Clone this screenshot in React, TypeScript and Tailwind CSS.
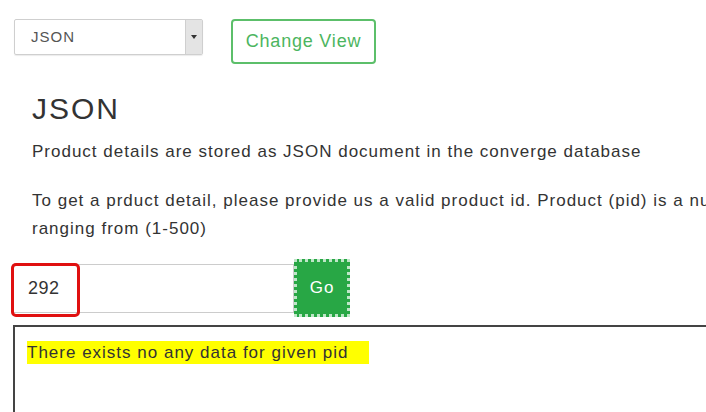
import React from "react";

export default function App() {
  return (
    <div className="w-[706px] h-[412px] overflow-hidden bg-white relative" style={{ fontFamily: '"Liberation Sans", Arial, sans-serif' }}>
      <div className="w-[820px]">
        <div className="flex items-start pt-[19px] pl-[14px] gap-[28px]">
          <div className="w-[189px] h-[36px] border border-[#cfcfcf] rounded-[2px] flex items-stretch shadow-[0_1px_1px_rgba(0,0,0,0.08)]">
            <div className="flex-1 flex items-center pl-[16px] text-[15px] tracking-[1px] text-[#555]">JSON</div>
            <div className="w-[17px] bg-[#e4e4e4] border-l border-[#cfcfcf] flex items-center justify-center">
              <div className="w-0 h-0 border-l-[3px] border-r-[3px] border-t-[4px] border-l-transparent border-r-transparent border-t-[#333]" />
            </div>
          </div>
          <button className="w-[145px] h-[45px] border-2 border-[#5cbf6a] rounded-[4px] text-[18px] tracking-[0.8px] text-[#4cb560] bg-white">
            Change View
          </button>
        </div>
        <div className="pl-[32px]">
          <h2 className="text-[30px] leading-[36px] tracking-[2px] text-[#333] mt-[27px]">JSON</h2>
          <p className="text-[17px] leading-[24px] tracking-[1px] text-[#333] mt-[13px]">
            Product details are stored as JSON document in the converge database
          </p>
          <p className="text-[17px] leading-[28px] tracking-[1px] text-[#333] mt-[23px] w-[765px]">
            To get a prduct detail, please provide us a valid product id. Product (pid) is a number ranging from (1-500)
          </p>
        </div>
        <div className="pl-[12px] mt-[16px] flex items-center">
          <div className="relative w-[282px] h-[49px] border border-[#ccc] flex items-center pl-[15px] text-[18px] tracking-[0.5px] text-[#333]">
            292
            <div className="absolute left-[-2px] top-[-2px] w-[69px] h-[54px] border-[3px] border-[#e01010] rounded-[5px]" />
          </div>
          <div className="w-[56px] h-[58px] border-[3px] border-dotted border-[#bfe6c8] bg-[#28a745] flex items-center justify-center text-white text-[17px] tracking-[1px]">
            Go
          </div>
        </div>
        <div className="ml-[13px] mt-[8px] h-[100px] border-2 border-[#444] pt-[14px] pl-[12px]">
          <span className="bg-[#ffff00] text-[#333] text-[17px] leading-[23px] tracking-[1px] inline-block pr-[20px]">There exists no any data for given pid</span>
        </div>
      </div>
    </div>
  );
}
